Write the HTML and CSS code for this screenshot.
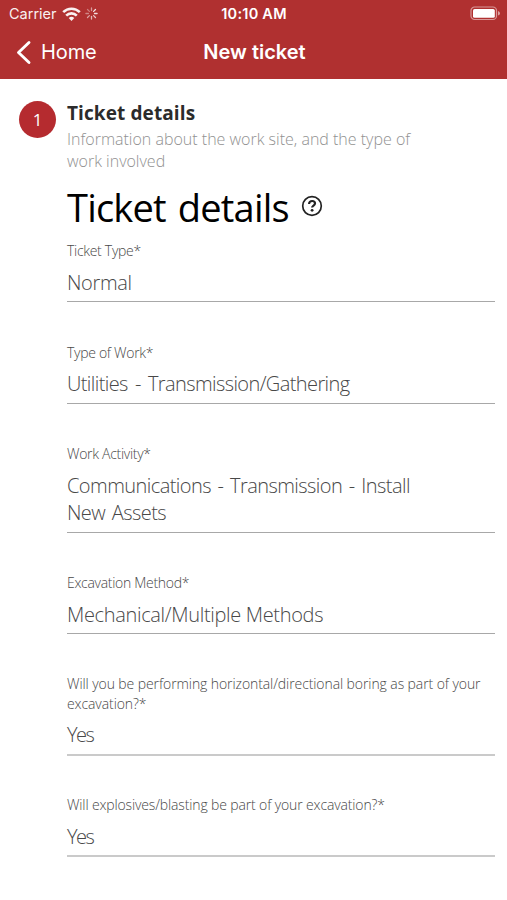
FILE: index.html
```html
<!DOCTYPE html>
<html lang="en">
<head>
<meta charset="utf-8">
<title>New ticket</title>
<link rel="stylesheet" href="styles.css">
</head>
<body>
<header class="top">
  <div class="status">
    <div class="carrier">
      <span>Carrier</span>
      <svg class="wifi" width="19" height="14" viewBox="0 0 19 14" fill="none" stroke="#fff" stroke-width="2.6">
        <path d="M1.2 5.2a11.8 11.8 0 0 1 16.6 0"/>
        <path d="M4.2 8.6a7.5 7.5 0 0 1 10.6 0"/>
        <path d="M9.5 13.9 6.7 11.100a4 4 0 0 1 5.6 0z" fill="#fff" stroke="none"/>
      </svg>
      <svg class="spinner" width="13" height="13" viewBox="-6.5 -6.5 13 13" stroke="#fff" stroke-width="1.3" stroke-linecap="round">
        <path d="M0-3v-2.6" opacity=".55"/>
        <path d="M2.1-2.1 4-4" opacity=".95"/>
        <path d="M3 0h2.6" opacity=".9"/>
        <path d="M2.1 2.1 4 4" opacity=".8"/>
        <path d="M0 3v2.6" opacity=".7"/>
        <path d="M-2.1 2.1-4 4" opacity=".6"/>
        <path d="M-3 0h-2.6" opacity=".45"/>
        <path d="M-2.1-2.1-4-4" opacity=".4"/>
      </svg>
    </div>
    <span class="clock">10:10 AM</span>
    <svg class="battery" width="31" height="15" viewBox="0 0 31 15">
      <rect x="1" y="1" width="25.5" height="12.5" rx="3.6" fill="none" stroke="#fff" stroke-opacity=".5" stroke-width="1.2"/>
      <rect x="3" y="3" width="21.8" height="8.8" rx="1.6" fill="#fff"/>
      <path d="M28 5v4.600q2-.7 2-2.300t-2-2.300z" fill="#fff" opacity=".55"/>
    </svg>
  </div>
  <nav class="nav">
    <a class="back">
      <svg width="16" height="25" viewBox="0 0 16 25" fill="none" stroke="#fff" stroke-width="2.900" stroke-linecap="round" stroke-linejoin="round"><path d="M13 2.500 2.500 12.500 13 22.500"/></svg>
      <span>Home</span>
    </a>
    <h1 class="title">New ticket</h1>
  </nav>
</header>
<main class="step">
  <div class="badge">1</div>
  <div class="content">
    <h2 class="step-title">Ticket details</h2>
    <p class="step-info">Information about the work site, and the type of work involved</p>
    <div class="heading">
      <span class="heading-text">Ticket details</span>
      <svg class="help" width="22" height="22" viewBox="0 0 22 22" fill="none" stroke="#222">
        <circle cx="11" cy="11" r="9.300" stroke-width="1.700"/>
        <path d="M8.100 8.900c0-1.900 1.300-2.900 3-2.900s2.900 1 2.900 2.500c0 2-2.900 2.100-2.900 4" stroke-width="2.2"/>
        <circle cx="11.100" cy="15.300" r="1.400" fill="#222" stroke="none"/>
      </svg>
    </div>
    <div class="field"><div class="label">Ticket Type*</div><div class="value">Normal</div></div>
    <div class="field"><div class="label">Type of Work*</div><div class="value tight">Utilities - Transmission/Gathering</div></div>
    <div class="field"><div class="label">Work Activity*</div><div class="value spaced">Communications - Transmission - Install<br>New Assets</div></div>
    <div class="field"><div class="label">Excavation Method*</div><div class="value">Mechanical/Multiple Methods</div></div>
    <div class="field soft"><div class="label long">Will you be performing horizontal/directional boring as part of your<br>excavation?*</div><div class="value short">Yes</div></div>
    <div class="field soft"><div class="label last">Will explosives/blasting be part of your excavation?*</div><div class="value short">Yes</div></div>
  </div>
</main>
</body>
</html>
```
FILE: styles.css
```css
* { box-sizing: border-box; }
body {
  margin: 0;
  min-height: 900px;
  background: #fff;
  font-family: "Open Sans", "Noto Sans", sans-serif;
  overflow: hidden;
}
h1, h2, p { margin: 0; }
svg { display: block; flex: none; }
.top {
  height: 79px;
  background: #b03030;
  color: #fff;
  font-family: Inter, "Liberation Sans", sans-serif;
}
.status {
  display: grid;
  grid-template-columns: 1fr auto 1fr;
  align-items: center;
  height: 27px;
  padding: 0 6px 0 9px;
}
.carrier { display: flex; align-items: center; font-size: 14.5px; opacity: .93; }
.wifi { margin-left: 5px; }
.spinner { margin-left: 4px; }
.clock { margin-right: 2px; font-size: 14.5px; font-weight: 600; letter-spacing: 0.25px; }
.battery { justify-self: end; }
.nav {
  display: grid;
  grid-template-columns: 1fr auto 1fr;
  align-items: center;
  height: 50px;
  padding: 0 14px 0 16px;
}
.back { display: flex; align-items: center; gap: 9px; font-size: 20px; letter-spacing: -0.1px; }
.title { font-size: 20px; font-weight: 600; line-height: 24px; }
.step { display: flex; padding: 22px 12px 0 19px; }
.badge {
  flex: none;
  width: 37px;
  height: 37px;
  margin-right: 11px;
  border-radius: 50%;
  background: #b52b2f;
  color: #fff;
  font-size: 17px;
  line-height: 38px;
  text-align: center;
}
.content { flex: 1; min-width: 0; }
.step-title { font-size: 19px; font-weight: 700; line-height: 24px; letter-spacing: 0.1px; color: #2b2b2b; }
.step-info { margin-top: 3px; width: 370px; font-size: 16px; font-weight: 300; line-height: 22px; color: #919191; }
.heading { display: flex; align-items: flex-start; height: 60px; margin-top: 5px; color: #000; }
.heading-text { font-size: 38px; line-height: 60px; letter-spacing: -0.8px; word-spacing: 3px; white-space: nowrap; }
.help { margin: 18px 0 0 12px; }
.field {
  margin-bottom: 40.4px;
  padding-bottom: 5px;
  border-bottom: 1px solid #a8a8a8;
  color: #484848;
  font-weight: 300;
  white-space: nowrap;
}
.heading + .field { margin-top: 4.4px; }
.soft { border-bottom: 2px solid #cacaca; margin-bottom: 39.400px; }
.label { font-size: 14px; line-height: 19.500px; letter-spacing: -0.3px; }
.long { letter-spacing: -0.09px; }
.last { letter-spacing: -0.14px; }
.value { margin-top: 8px; font-size: 20px; line-height: 27.500px; letter-spacing: -0.33px; }
.tight { letter-spacing: -0.6px; word-spacing: 2.600px; }
.spaced { letter-spacing: -0.56px; word-spacing: 2px; }
.short { letter-spacing: -1.5px; }
```
